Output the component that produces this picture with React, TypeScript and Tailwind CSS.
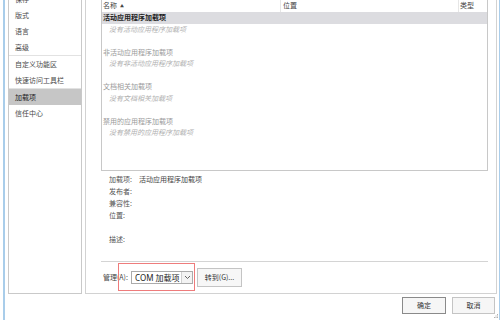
import React from "react";

function SideItem({ label, active }: { label: string; active?: boolean }) {
  return (
    <div
      className={
        "h-[16px] flex items-center pl-[6px] " +
        (active ? "bg-[#c6c6c6] text-[#222]" : "text-[#4a4a4a]")
      }
    >
      {label}
    </div>
  );
}

function GroupRow({ label, active }: { label: string; active?: boolean }) {
  return (
    <div
      className={
        "h-[11.5px] flex items-center pl-[1px] " +
        (active ? "bg-[#dcdce0] font-bold text-[#222]" : "text-[#9a9a9a]")
      }
    >
      {label}
    </div>
  );
}

function EmptyRow({ label }: { label: string }) {
  return (
    <div className="h-[11.5px] flex items-center pl-[7px] italic text-[#b0b0b0]">
      {label}
    </div>
  );
}

function Blank() {
  return <div className="h-[11.5px]" />;
}

function Detail({ label, value }: { label: string; value?: string }) {
  return (
    <div className="h-[12px] flex items-center">
      <div className="w-[30px] shrink-0 text-[#555]">{label}</div>
      {value && <div className="text-[#444]">{value}</div>}
    </div>
  );
}

export default function App() {
  return (
    <div className="w-[500px] h-[320px] bg-white overflow-hidden flex relative font-['Noto_Sans_CJK_SC','Noto_Sans',sans-serif] text-[7px] leading-none text-[#444]">
      <div className="w-[3px] shrink-0" />
      <div className="w-[2px] shrink-0 bg-[#a9cdea]" />
      <div className="w-[3px] shrink-0" />
      <div className="w-[489px] shrink-0 flex flex-col">
        {/* content area */}
        <div className="mt-[-20px] h-[314px] flex gap-[3px] shrink-0">
          {/* sidebar */}
          <div className="w-[74px] shrink-0 border border-[#c9c9c9] pt-[10px] flex flex-col">
            <SideItem label="保存" />
            <SideItem label="版式" />
            <SideItem label="语言" />
            <SideItem label="高级" />
            <div className="h-px bg-[#e2e2e2]" />
            <SideItem label="自定义功能区" />
            <SideItem label="快速访问工具栏" />
            <div className="h-px bg-[#e2e2e2]" />
            <SideItem label="加载项" active />
            <SideItem label="信任中心" />
          </div>
          {/* main */}
          <div className="w-[412px] shrink-0 border border-[#d2d2d2] pt-[17px] pl-[15px] flex flex-col">
            {/* list */}
            <div className="w-[387px] h-[173px] border border-[#c8c8c8] flex flex-col shrink-0">
              <div className="h-[13px] flex text-[#444] shrink-0">
                <div className="w-[179px] border-r border-[#e6e6e6] flex items-center pl-[1px] gap-[3px]">
                  <span>名称</span>
                  <span className="text-[4px]">▲</span>
                </div>
                <div className="w-[178px] border-r border-[#e6e6e6] flex items-center pl-[2px]">
                  位置
                </div>
                <div className="flex-1 flex items-center pl-[1px]">类型</div>
              </div>
              <GroupRow label="活动应用程序加载项" active />
              <EmptyRow label="没有活动应用程序加载项" />
              <Blank />
              <GroupRow label="非活动应用程序加载项" />
              <EmptyRow label="没有非活动应用程序加载项" />
              <Blank />
              <GroupRow label="文档相关加载项" />
              <EmptyRow label="没有文档相关加载项" />
              <Blank />
              <GroupRow label="禁用的应用程序加载项" />
              <EmptyRow label="没有禁用的应用程序加载项" />
            </div>
            {/* details */}
            <div className="mt-[2px] pl-[8px] flex flex-col shrink-0">
              <Detail label="加载项:" value="活动应用程序加载项" />
              <Detail label="发布者:" />
              <Detail label="兼容性:" />
              <Detail label="位置:" />
              <div className="h-[12px]" />
              <Detail label="描述:" />
            </div>
            <div className="mt-[16px] w-[387px] h-px bg-[#d4d4d4] shrink-0" />
            {/* manage row */}
            <div className="relative h-[31px] flex items-center pl-[2px] shrink-0">
              <div className="w-[28px] shrink-0 text-[#444]">管理(A):</div>
              <div className="w-[62px] h-[13px] border border-[#ababab] bg-white flex items-stretch">
                <div className="flex-1 flex items-center pl-[3px] text-[8px] text-[#222] font-['Noto_Sans','Noto_Sans_CJK_SC',sans-serif]">
                  COM 加载项
                </div>
                <div className="w-[11px] border-l border-[#d0d0d0] bg-[#f3f3f3] flex items-center justify-center">
                  <svg width="7" height="5" viewBox="0 0 7 5">
                    <polyline points="1,1 3.5,3.5 6,1" fill="none" stroke="#555" strokeWidth="0.9" />
                  </svg>
                </div>
              </div>
              <div className="ml-[4px] w-[45px] h-[19px] border border-[#c4c4c4] bg-[#f7f7f7] flex items-center justify-center text-[#333]">
                转到(G)...
              </div>
              <div className="absolute left-[17px] top-[1px] w-[77px] h-[28px] border border-[#ee7c7c]" />
            </div>
          </div>
        </div>
        {/* bottom buttons */}
        <div className="flex-1 flex justify-end items-start pt-[3px] pr-[2px] gap-[6px]">
          <div className="w-[44px] h-[17px] border border-[#8a8a8a] bg-[#f6f6f6] flex items-center justify-center text-[#333]">
            确定
          </div>
          <div className="w-[43px] h-[17px] border border-[#c4c4c4] bg-[#f6f6f6] flex items-center justify-center text-[#333]">
            取消
          </div>
        </div>
      </div>
      <div className="w-[2px] shrink-0" />
      <div className="w-[1px] shrink-0 bg-[#a9cdea]" />
      <svg className="absolute right-[2px] bottom-[2px]" width="4" height="4" viewBox="0 0 4 4">
        <rect x="3" y="0" width="1" height="1" fill="#b0b0b0" />
        <rect x="1.5" y="1.5" width="1" height="1" fill="#b0b0b0" />
        <rect x="3" y="1.5" width="1" height="1" fill="#b0b0b0" />
        <rect x="0" y="3" width="1" height="1" fill="#b0b0b0" />
        <rect x="1.5" y="3" width="1" height="1" fill="#b0b0b0" />
        <rect x="3" y="3" width="1" height="1" fill="#b0b0b0" />
      </svg>
    </div>
  );
}
